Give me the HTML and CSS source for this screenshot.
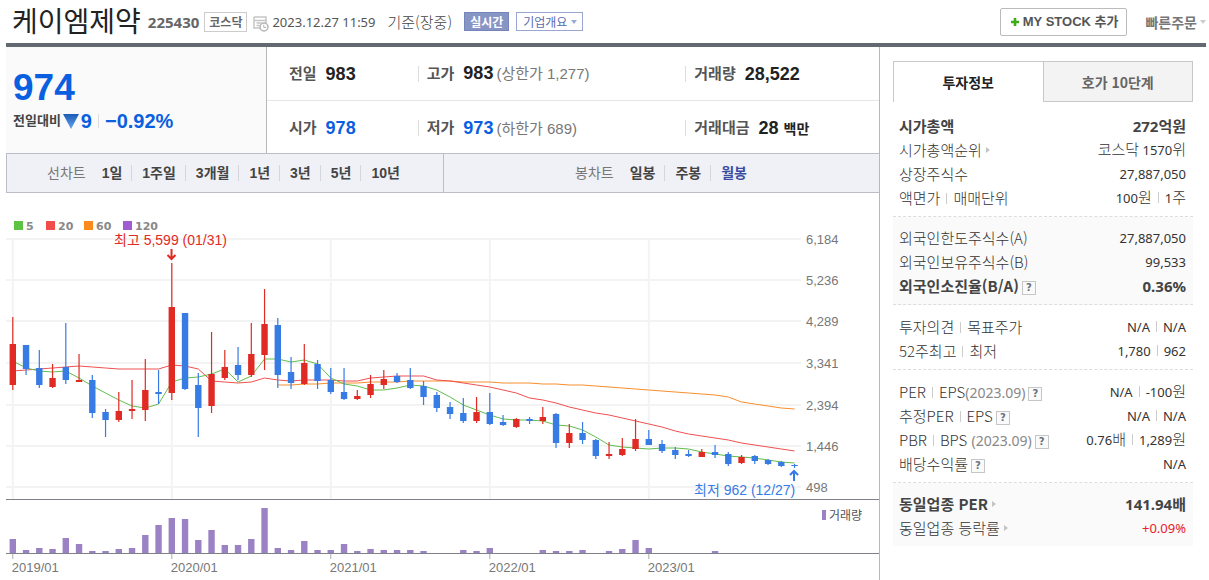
FILE: index.html
```html
<!DOCTYPE html>
<html lang="ko">
<head>
<meta charset="utf-8">
<title>케이엠제약</title>
<link rel="stylesheet" href="styles.css">
</head>
<body>
<header class="top">
  <h1 class="name">케이엠제약</h1>
  <b class="code">225430</b>
  <span class="market">코스닥</span>
  <svg class="clock" width="16" height="16" viewBox="0 0 16 16" aria-hidden="true"><path d="M1 1h12v6M1 1v11h6M1 4.500h12M3.500 7h5M3.500 9.500h3" fill="none" stroke="#c6c6c6" stroke-width="1.500"/><circle cx="11" cy="11" r="4" fill="#fff" stroke="#b5b5b5" stroke-width="1.500"/><path d="M10.800 8.800v2.700H13" fill="none" stroke="#b5b5b5"/></svg>
  <time class="date">2023.12.27 11:59</time>
  <span class="basis">기준(장중)</span>
  <button class="live" type="button">실시간</button>
  <button class="summary" type="button">기업개요<i class="down"></i></button>
  <button class="mystock" type="button"><svg width="8" height="8" viewBox="0 0 8 8" aria-hidden="true"><path d="M4 0v8M0 4h8" stroke="#3cae14" stroke-width="2.600"/></svg>MY STOCK 추가</button>
  <button class="quick" type="button">빠른주문<i class="down"></i></button>
</header>
<div class="page">
  <main class="main">
    <section class="quote">
      <div class="now">
        <strong class="price">974</strong>
        <p class="change"><span class="label">전일대비</span><svg width="16" height="15" viewBox="0 0 16 15" aria-hidden="true"><defs><linearGradient id="fall" x2="0" y2="1"><stop offset="0" stop-color="#1c5bb4"/><stop offset="1" stop-color="#65a5ee"/></linearGradient></defs><path d="M0 0h16L8 15z" fill="url(#fall)"/></svg><b>9</b><b class="rate">−0.92%</b></p>
      </div>
      <dl class="facts">
        <div><dt>전일</dt><dd>983</dd></div>
        <div><dt>고가</dt><dd>983 <small>(상한가 1,277)</small></dd></div>
        <div><dt>거래량</dt><dd>28,522</dd></div>
        <div><dt>시가</dt><dd class="fall">978</dd></div>
        <div><dt>저가</dt><dd class="fall">973 <small>(하한가 689)</small></dd></div>
        <div><dt>거래대금</dt><dd>28 <span class="unit">백만</span></dd></div>
      </dl>
    </section>
    <nav class="ranges">
      <div class="lines"><span>선차트</span>
        <ul><li><a href="#d1">1일</a></li><li><a href="#w1">1주일</a></li><li><a href="#m3">3개월</a></li><li><a href="#y1">1년</a></li><li><a href="#y3">3년</a></li><li><a href="#y5">5년</a></li><li><a href="#y10">10년</a></li></ul>
      </div>
      <div class="candles"><span>봉차트</span>
        <ul><li><a href="#day">일봉</a></li><li><a href="#week">주봉</a></li><li><a class="on" href="#month">월봉</a></li></ul>
      </div>
    </nav>
    <svg class="chart" id="chart" viewBox="6 193 873 387" role="img" aria-label="월봉 차트"></svg>
  </main>
  <aside class="side">
    <div class="tabs"><button class="tab on" type="button">투자정보</button><button class="tab" type="button">호가 10단계</button></div>
    <table class="info">
      <tbody>
        <tr class="strong"><th>시가총액</th><td>272<span>억원</span></td></tr>
        <tr><th>시가총액순위<i class="more"></i></th><td><span>코스닥</span> 1570<span>위</span></td></tr>
        <tr><th>상장주식수</th><td>27,887,050</td></tr>
        <tr><th>액면가<i class="bar"></i>매매단위</th><td>100<span>원</span><i class="bar"></i>1<span>주</span></td></tr>
      </tbody>
      <tbody class="tint">
        <tr><th>외국인한도주식수(A)</th><td>27,887,050</td></tr>
        <tr><th>외국인보유주식수(B)</th><td>99,533</td></tr>
        <tr class="strong"><th>외국인소진율(B/A)<button class="help" type="button">?</button></th><td>0.36%</td></tr>
      </tbody>
      <tbody>
        <tr><th>투자의견<i class="bar"></i>목표주가</th><td>N/A<i class="bar"></i>N/A</td></tr>
        <tr><th>52주최고<i class="bar"></i>최저</th><td>1,780<i class="bar"></i>962</td></tr>
      </tbody>
      <tbody>
        <tr><th>PER<i class="bar"></i>EPS<small>(2023.09)</small><button class="help" type="button">?</button></th><td>N/A<i class="bar"></i>-100<span>원</span></td></tr>
        <tr><th>추정PER<i class="bar"></i>EPS<button class="help" type="button">?</button></th><td>N/A<i class="bar"></i>N/A</td></tr>
        <tr><th>PBR<i class="bar"></i>BPS <small>(2023.09)</small><button class="help" type="button">?</button></th><td>0.76<span>배</span><i class="bar"></i>1,289<span>원</span></td></tr>
        <tr><th>배당수익률<button class="help" type="button">?</button></th><td>N/A</td></tr>
      </tbody>
      <tbody class="tint last">
        <tr class="strong"><th>동일업종 PER<i class="more"></i></th><td>141.94<span>배</span></td></tr>
        <tr><th>동일업종 등락률<i class="more"></i></th><td class="rise">+0.09%</td></tr>
      </tbody>
    </table>
  </aside>
</div>
<script src="chart.js"></script>
</body>
</html>
```
FILE: styles.css
```css
* { box-sizing: border-box; }
body { margin: 0; background: #fff; color: #333; font-family: "Liberation Sans", "Noto Sans CJK KR", sans-serif; }
h1, p, dl, dd, ul { margin: 0; padding: 0; }
button { font: inherit; color: inherit; border: 0; background: none; padding: 0; cursor: pointer; white-space: nowrap; }
a { color: inherit; text-decoration: none; }

.top { display: flex; align-items: center; height: 47px; margin: 0 3px 0 6px; padding-left: 6px; border-bottom: 4px solid #626971; white-space: nowrap; }
.name { font: 400 28px/36px "Noto Sans CJK KR", sans-serif; margin-bottom: 4px; color: #222; }
.code { margin-left: 7px; font: 700 15px/20px "Noto Sans", sans-serif; color: #666; }
.market { margin-left: 5px; padding: 0 4px; border: 1px solid #ccc; font: 700 12px/18px "Noto Sans CJK KR", sans-serif; color: #666; }
.clock { margin: 4px 3px 0 6px; }
.date { font: 13px/20px "Noto Sans", sans-serif; color: #555; }
.basis { margin-left: 12px; font: 300 15px/20px "Noto Sans CJK KR", sans-serif; color: #444; }
.live, .summary { height: 19px; margin-left: 12px; border: 1px solid #7585bb; font: 700 12px/16px "Noto Sans CJK KR", sans-serif; }
.live { padding: 0 5px; background: #8795c5; color: #fff; }
.summary { display: flex; align-items: center; margin-left: 7px; padding: 0 5px 0 6px; border-color: #9aa6d2; color: #5a6cae; font-weight: 400; }
.down { display: inline-block; margin-left: 4px; border: 3px solid transparent; border-top: 4px solid #9aaad6; border-bottom: 0; }
.mystock { display: flex; align-items: center; gap: 4px; height: 28px; margin-left: auto; padding: 0 8px 0 10px; border: 1px solid #bbb; border-radius: 2px; font-size: 13px; line-height: 20px; font-weight: 700; color: #555; }
.quick { margin-left: 18px; font: 700 14px/20px "Noto Sans CJK KR", sans-serif; color: #777; display: flex; align-items: center; }
.quick .down { margin-left: 3px; border-top-color: #ccc; }

.page { display: grid; grid-template-columns: minmax(0, 1fr) 326px; margin: 0 3px 0 6px; }
.main { border-right: 1px solid #b8b8b8; }
.quote { display: grid; grid-template-columns: 261px 1fr; }
.now { padding: 22px 0 0 7px; background: #fafafa; border-right: 1px solid #b8b8b8; color: #0a5fe0; }
.price { display: block; font-size: 37px; line-height: 38px; }
.change { display: flex; align-items: center; font-size: 20px; line-height: 28px; }
.change .label { margin-right: 2px; font-size: 13px; line-height: 28px; font-weight: 700; color: #444; }
.change svg { margin-right: 2px; }
.rate { margin-left: 6px; padding-left: 6px; border-left: 1px solid #ddd; line-height: 14px; }
.facts { display: grid; grid-template-columns: 151fr 268fr 194fr; grid-template-rows: 54px 52px; }
.facts div { display: flex; align-items: center; }
.facts div:nth-child(-n+3) { border-bottom: 1px solid #e6e6e6; }
.facts div:nth-child(n+4) { padding-top: 2px; }
.facts dt { padding-left: 22px; font-size: 15px; line-height: 16px; font-weight: 700; color: #555; white-space: nowrap; }
.facts div:not(:nth-child(3n+1)) dt { padding-left: 8px; border-left: 1px solid #ddd; }
.facts dd { margin-left: 9px; font-size: 18px; line-height: 22px; font-weight: 700; color: #222; white-space: nowrap; }
.facts .fall { color: #0a5fe0; }
.facts small { margin-left: -2px; font-size: 15px; font-weight: 400; color: #777; }
.facts .unit { font-size: 14px; }

.ranges { display: grid; grid-template-columns: 1fr 1fr; height: 40px; background: #f0f1f6; border: 1px solid #bcbdc6; border-right: 0; font-size: 14px; line-height: 16px; font-weight: 700; color: #444; }
.ranges div { display: flex; align-items: center; padding-left: 40px; }
.ranges .candles { padding-left: 131px; border-left: 1px solid #bcbdc6; }
.ranges span { margin-right: 7px; font-weight: 400; color: #777; }
.ranges ul { display: flex; list-style: none; }
.ranges li { padding: 0 9px; white-space: nowrap; }
.ranges li + li { padding-left: 10px; border-left: 1px solid #d5d6dc; }
.ranges .on { color: #3a4ca3; }

.chart { display: block; width: 100%; font-family: "Liberation Sans", "Noto Sans CJK KR", sans-serif; }
.chart .grid { stroke: #f3f3f3; stroke-width: 2; }
.chart .axis { stroke: #808088; stroke-width: 1; }
.chart .rise { fill: #e02b24; }
.chart .fall { fill: #377be5; }
.chart .volume { fill: #9a82c5; }
.chart .ma { fill: none; stroke-width: 1; }
.chart .ma5 { stroke: #62be4c; }
.chart .ma20 { stroke: #f05050; }
.chart .ma60 { stroke: #f98e2c; }
.chart .tick { font-size: 13px; fill: #777; }
.chart .note { font-size: 14px; }
.chart .key { font: 700 11px "DejaVu Sans", sans-serif; fill: #888; }
.chart .arrow { fill: none; stroke-width: 2; }

.side { padding: 14px 13px 0; }
.tabs { display: flex; height: 41px; }
.tab { flex: 1; border: 1px solid #c8c8c8; background: #f3f3f3; font: 700 14px/20px "Noto Sans CJK KR", sans-serif; color: #666; }
.tab.on { border-right: 0; border-bottom: 0; background: #fff; color: #222; }
.info { display: flex; flex-direction: column; font: 13px/24px "Noto Sans", sans-serif; color: #333; }
.info tbody { display: block; padding: 10px 7px 6px 6px; border-bottom: 1px dashed #ddd; }
.info tbody:first-child { padding-top: 12px; }
.info .tint { padding-top: 9px; background: #fafafa; }
.info .last { border: 0; }
.info tr { display: flex; justify-content: space-between; height: 24px; white-space: nowrap; }
.info th, .info td { padding: 0; }
.info th { font: 300 15px/24px "Noto Sans CJK KR", sans-serif; }
.info td span { font: 300 15px/20px "Noto Sans CJK KR", sans-serif; }
.info .strong { color: #444; }
.info .strong td { font-size: 15px; }
.info .strong th, .info .strong td, .info .strong span { font-weight: 700; }
.info small { font: 14px/20px "Noto Sans", sans-serif; color: #888; }
.info .rise { color: #e8202a; }
.bar { display: inline-block; width: 1px; height: 11px; margin: 0 6px; background: #ccc; }
.more { display: inline-block; margin: 0 0 3px 4px; border: 3px solid transparent; border-left: 4px solid #c4c4c4; border-right: 0; }
.help { width: 14px; height: 14px; margin-left: 3px; border: 1px solid #c6c6c6; background: #fafafa; font: 700 10px/11px "DejaVu Sans", sans-serif; color: #68727e; vertical-align: 1px; }
```
FILE: chart.js
```js
const chart = document.getElementById('chart');
const x = i => 12.8 + 13.25 * i;

// kind, high, body top, body bottom, low
const candles = [
  ['r',317,344,385,390],['f',345,345,369,375],['f',350,368,385,388],['r',364,378,387,388],
  ['f',323,367,380,384],['r',354,380,382,382],['f',375,380,413,418],['f',409,412,420,437],
  ['r',392,411,420,422],['r',380,409,411,419],['r',359,390,410,421],['f',370,392,394,404],
  ['r',263,307,393,400],['f',313,313,389,390],['f',373,385,408,437],['r',332,374,406,413],
  ['r',350,367,378,380],['f',347,365,375,380],['r',323,354,375,377],['r',289,324,355,370],
  ['f',318,325,375,388],['f',357,372,383,389],['r',344,363,384,385],['f',360,364,381,389],
  ['f',368,380,392,394],['f',368,392,399,400],['r',390,396,399,400],['r',375,384,395,398],
  ['r',370,379,385,389],['f',373,376,382,383],['f',368,380,388,389],['f',381,386,397,405],
  ['f',392,395,408,412],['f',402,407,414,419],['f',398,413,421,423],['r',397,412,421,423],
  ['f',393,412,424,425],['f',415,422,425,426],['r',418,419,427,428],['f',417,419,421,424],
  ['r',407,417,421,424],['f',413,414,443,448],['r',424,433,443,448],['f',422,433,440,444],
  ['f',439,440,456,459],['r',442,454,456,459],['r',438,449,455,456],['r',419,439,449,451],
  ['f',430,439,445,445],['f',440,444,451,453],['f',447,450,455,459],['f',450,454,456,457],
  ['r',449,452,457,457],['f',445,452,455,458],['f',452,454,464,466],['r',455,457,463,464],
  ['f',455,456,461,464],['f',459,460,464,465],['f',461,462,466,467],['f',464,465,466,468]
];
const ma5 = [361,368,371,372,371,378,386,393,400,406,408,404,382,378,377,374,369,382,376,359,359,362,360,364,378,384,386,390,390,388,385,386,390,397,405,410,415,419,420,420,421,425,426,430,437,445,447,448,449,448,448,449,452,454,456,457,458,460,462,463];
const ma20 = [371,370,369,368,367,366,367,368,369,369,369,369,365,366,369,381,382,383,382,378,380,381,380,380,380,381,381,378,377,376,376,376,380,381,383,385,387,390,393,398,400,403,407,410,413,415,418,421,424,427,431,434,436,438,440,443,445,447,449,451];
const ma60 = [385,385,384,384,383,383,383,382,382,382,381,381,381,381,382,382,382,383,383,383,384,384,385,385,386,387,388,389,390,391,392,393,394,395,397,402,404,406,408,409];
const volumes = [14,3,5,4,15,9,2,2,4,5,18,28,35,34,13,23,8,8,14,45,5,3,12,3,3,9,2,4,3,3,3,2,0,0,3,2,5,0,0,0,3,2,2,3,0,2,4,13,5,0,0,0,0,2];
const prices = [['6,184',239],['5,236',280],['4,289',321],['3,341',363],['2,394',405],['1,446',446],['498',487]];
const years = ['2019/01','2020/01','2021/01','2022/01','2023/01'];
const keys = [['5',14,'#5cc344'],['20',46,'#f04c4c'],['60',84,'#fa8a1e'],['120',123,'#a05cd0']];

const line = (cls, values, start) =>
  `<polyline class="ma ${cls}" points="${values.map((y, i) => `${x(i + start)},${y}`).join(' ')}"/>`;

let out = '';
prices.forEach(([t, y]) => {
  out += `<path class="grid" d="M6 ${y}H801"/><text class="tick" x="806" y="${y + 5}">${t}</text>`;
});
years.forEach((t, i) => {
  const c = x(i * 12);
  out += `<path class="grid" d="M${c} 239V499"/><path d="M${c} 553V559" stroke="#aaa"/><text class="tick" x="${c - 1}" y="572">${t}</text>`;
});
out += line('ma60', ma60, 20) + line('ma20', ma20, 0) + line('ma5', ma5, 0);
candles.forEach(([k, high, top, bottom, low], i) => {
  out += `<g class="${k === 'r' ? 'rise' : 'fall'}"><rect x="${x(i) - 0.6}" y="${high}" width="1.2" height="${low - high}"/><rect x="${x(i) - 3.2}" y="${top}" width="6.4" height="${bottom - top}"/></g>`;
});
volumes.forEach((v, i) => {
  out += `<rect class="volume" x="${x(i) - 3.2}" y="${553 - v}" width="6.4" height="${v}"/>`;
});
out += '<path class="axis" d="M6 499.500H879M6 553.500H879"/>';
keys.forEach(([t, kx, c]) => {
  out += `<rect x="${kx}" y="221" width="9" height="9" fill="${c}"/><text class="key" x="${kx + 12}" y="230">${t}</text>`;
});
out += '<text class="note rise" x="114" y="245">최고 5,599 (01/31)</text>';
out += '<path class="arrow" stroke="#e02b24" d="M171.500 249V259M167.500 255L171.500 259L175.500 255"/>';
out += '<text class="note fall" x="694" y="495">최저 962 (12/27)</text>';
out += '<path class="arrow" stroke="#377be5" d="M794 481V471M790 475L794 471L798 475"/>';
out += '<rect class="volume" x="822" y="510" width="4" height="10"/><text x="829" y="520" font-size="12" fill="#555">거래량</text>';
chart.innerHTML = out;
```
